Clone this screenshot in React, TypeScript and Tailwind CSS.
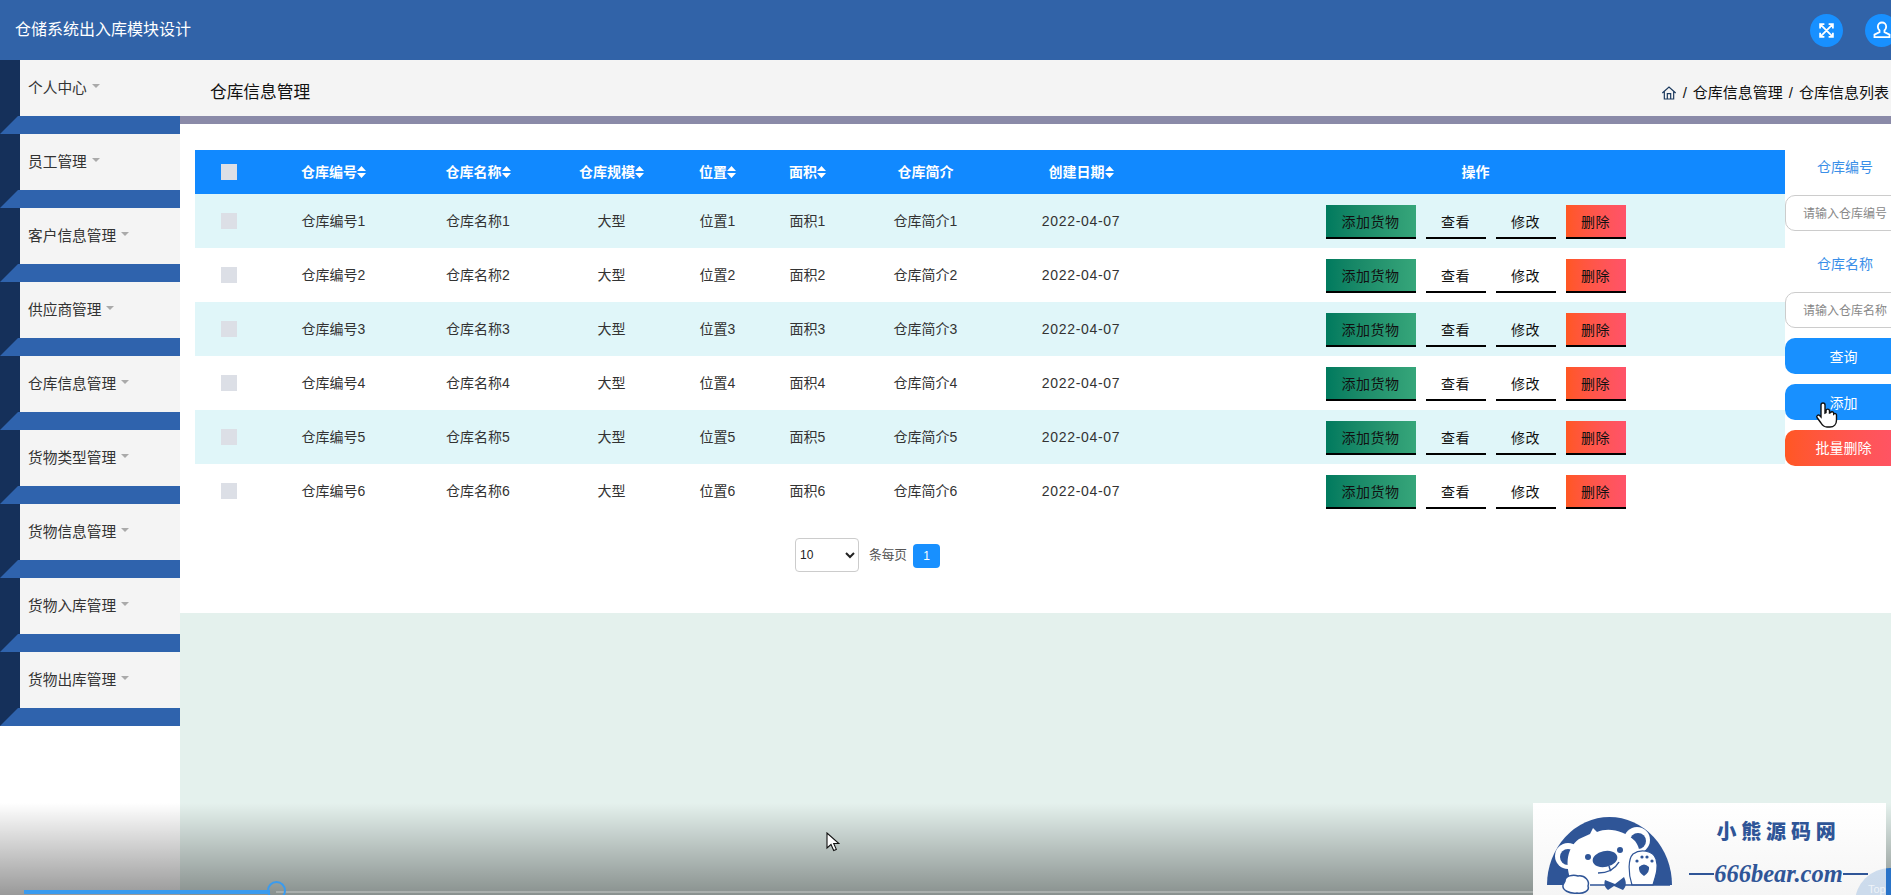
const fontStack = "font-['Liberation_Sans','Noto_Sans_CJK_SC',sans-serif]";
const menus = ["个人中心", "员工管理", "客户信息管理", "供应商管理", "仓库信息管理", "货物类型管理", "货物信息管理", "货物入库管理", "货物出库管理"];
const rows = [1, 2, 3, 4, 5, 6];

function Sort() {
  return (
    <svg width="9" height="12" viewBox="0 0 9 12" className="inline-block align-[-1px]">
      <path d="M4.5 0 9 5H0zM0 7h9L4.5 12z" fill="#fff" />
    </svg>
  );
}

function Head({ label, sort = true }: { label: string; sort?: boolean }) {
  return (
    <th className="font-bold text-white text-[14px]">
      {label}
      {sort && <Sort />}
    </th>
  );
}

function Bear() {
  return (
    <svg width="150" height="90" viewBox="0 0 150 90" className="shrink-0">
      <path d="M12 80A62.5 68 0 0 1 137 80Z" fill="#2f5597" />
      <circle cx="33" cy="51" r="13" fill="#fff" />
      <circle cx="33" cy="52" r="8" fill="#2f5597" />
      <circle cx="102" cy="35" r="13" fill="#fff" />
      <circle cx="103" cy="36" r="8" fill="#2f5597" />
      <path d="M38 80C30 64 30 44 44 34L55 29 58 23 62 27C74 22 90 26 100 36 108 46 105 60 96 80Z" fill="#fff" />
      <path d="M97 80C93 68 93 54 98 49 105 44 118 45 121 54 124 64 120 72 118 80Z" fill="#fff" stroke="#2f5597" strokeWidth="1.2" />
      <circle cx="53" cy="52" r="3" fill="#2f5597" />
      <circle cx="85" cy="45" r="3" fill="#2f5597" />
      <ellipse cx="70" cy="54" rx="12.5" ry="8" transform="rotate(-12 70 54)" fill="#2f5597" />
      <path d="M63 68C72 68 80 64 84 57" fill="none" stroke="#2f5597" strokeWidth="1.5" />
      <path d="M74 61Q75 65 76 66" fill="none" stroke="#2f5597" strokeWidth="1.5" />
      <path d="M104 62Q109 57 114 62 115 67 109 71 103 67 104 62Z" fill="#2f5597" />
      <circle cx="102" cy="56" r="1.6" fill="#2f5597" />
      <circle cx="107" cy="52" r="1.6" fill="#2f5597" />
      <circle cx="112" cy="52" r="1.6" fill="#2f5597" />
      <circle cx="117" cy="56" r="1.6" fill="#2f5597" />
      <path d="M55 80H135" stroke="#2f5597" strokeWidth="1.5" />
      <path d="M70 75 80 79 89 72C92 78 91 82 88 85L79 81 73 85C69 82 69 78 70 75Z" fill="#2f5597" />
      <path d="M30 76C30 71 38 69 43 71 50 70 55 76 53 81 55 86 48 89 42 88 34 89 27 85 28 80Z" fill="#fff" stroke="#2f5597" strokeWidth="1.5" />
    </svg>
  );
}

export default function App() {
  return (
    <div className={`relative h-screen w-full overflow-hidden bg-white text-[#333] ${fontStack}`}>
      <header className="flex h-[60px] items-center justify-between bg-[#3163a8] pl-[15px] pr-0">
        <div className="text-[16px] text-white">仓储系统出入库模块设计</div>
        <div className="flex w-[81px] shrink-0 gap-[22px] overflow-hidden">
          <span className="flex h-[33px] w-[33px] shrink-0 items-center justify-center rounded-full bg-[#1890ff] text-white">
            <svg width="17" height="17" viewBox="0 0 24 24" fill="none" stroke="currentColor" strokeWidth="2.6">
              <path d="M3 3l18 18M21 3 3 21M3 9V3h6M15 3h6v6M21 15v6h-6M9 21H3v-6" />
            </svg>
          </span>
          <span className="flex h-[33px] w-[33px] shrink-0 items-center justify-center rounded-full bg-[#1890ff] text-white">
            <svg width="20" height="20" viewBox="0 0 24 24" fill="none" stroke="currentColor" strokeWidth="2.2">
              <path d="M12 3a5 5 0 0 1 5 5c0 2-1 3.5-2 4.5v2l6 3v3H3v-3l6-3v-2C8 11.5 7 10 7 8a5 5 0 0 1 5-5z" />
            </svg>
          </span>
        </div>
      </header>

      <div className="flex h-[835px]">
        <aside className="w-[180px] shrink-0">
          {menus.map((m) => (
            <div key={m}>
              <div className="h-[56px] bg-[#15305a] pl-[20px]">
                <div className="flex h-full items-center bg-[#f4f4f4] pl-[8px] text-[14.7px] text-[#333]">
                  {m}
                  <span className="ml-[5px] h-0 w-0 -translate-y-[2px] border-x-[4px] border-t-[4px] border-x-transparent border-t-[#aaa]" />
                </div>
              </div>
              <div className="h-[18px] bg-[#15305a]">
                <div className="h-full bg-[#2f63ad] [clip-path:polygon(18px_0,100%_0,100%_100%,0_100%)]" />
              </div>
            </div>
          ))}
        </aside>

        <main className="flex min-w-0 flex-1 flex-col bg-[#e4f1ed]">
          <div className="flex h-[64px] shrink-0 items-center justify-between border-b-8 border-[#8a8aa8] bg-[#f4f4f4] pl-[30px] pr-[2px] pt-[10px] text-[#111]">
            <div className="text-[16.7px]">仓库信息管理</div>
            <div className="flex items-center gap-[6px] text-[15px]">
              <svg width="16" height="16" viewBox="0 0 24 24" fill="none" stroke="#1c3a5e" strokeWidth="1.8">
                <path d="M2 12 12 3l10 9M5 10v11h14V10M9.5 21v-8h5v8" />
              </svg>
              <span>/</span>
              <span>仓库信息管理</span>
              <span>/</span>
              <span>仓库信息列表</span>
            </div>
          </div>

          <section className="h-[489px] shrink-0 overflow-hidden bg-white pl-[15px] pt-[26px]">
            <div className="flex w-[1710px] items-start">
              <div className="w-[1590px] shrink-0">
                <table className="w-[1590px] table-fixed border-collapse">
                  <colgroup>
                    <col className="w-[68px]" />
                    <col className="w-[141px]" />
                    <col className="w-[148px]" />
                    <col className="w-[119px]" />
                    <col className="w-[93px]" />
                    <col className="w-[87px]" />
                    <col className="w-[149px]" />
                    <col className="w-[162px]" />
                    <col />
                  </colgroup>
                  <thead>
                    <tr className="h-[44px] bg-[#1189ff]">
                      <th>
                        <span className="mx-auto block h-[16px] w-[16px] bg-[#dcdfe6]" />
                      </th>
                      <Head label="仓库编号" />
                      <Head label="仓库名称" />
                      <Head label="仓库规模" />
                      <Head label="位置" />
                      <Head label="面积" />
                      <Head label="仓库简介" sort={false} />
                      <Head label="创建日期" />
                      <th className="pl-[4px] text-[14px] font-bold text-white">操作</th>
                    </tr>
                  </thead>
                  <tbody>
                    {rows.map((n) => (
                      <tr key={n} className={`h-[54px] text-center text-[14px] text-[#333] ${n % 2 ? "bg-[#e0f6f9]" : "bg-white"}`}>
                        <td>
                          <span className="mx-auto block h-[16px] w-[16px] bg-[#dcdfe6]" />
                        </td>
                        <td>仓库编号{n}</td>
                        <td>仓库名称{n}</td>
                        <td>大型</td>
                        <td>位置{n}</td>
                        <td>面积{n}</td>
                        <td>仓库简介{n}</td>
                        <td className="tracking-[0.7px]">2022-04-07</td>
                        <td>
                          <div className="mt-[2px] flex justify-center gap-[10px] pl-[4px] text-[14px] tracking-[0.5px] text-[#111]">
                            <button className="h-[34px] w-[90px] border-b-2 border-black bg-gradient-to-r from-[#007a5e] to-[#36a67a] pt-[2px]">添加货物</button>
                            <button className="h-[34px] w-[60px] border-b-2 border-black pt-[2px]">查看</button>
                            <button className="h-[34px] w-[60px] border-b-2 border-black pt-[2px]">修改</button>
                            <button className="h-[34px] w-[60px] border-b-2 border-black bg-gradient-to-r from-[#ff5722] to-[#ff5369] pt-[2px]">删除</button>
                          </div>
                        </td>
                      </tr>
                    ))}
                  </tbody>
                </table>
                <div className="ml-[600px] mt-[20px] flex items-center text-[12px]">
                  <select className="h-[34px] w-[64px] rounded-[4px] border border-[#ccc] bg-white pl-0 text-[12px] text-[#222]">
                    <option>10</option>
                  </select>
                  <span className="ml-[10px] mt-[2px] text-[12.7px] text-[#555]">条每页</span>
                  <span className="ml-[6px] mt-[2px] flex h-[24px] w-[27px] items-center justify-center rounded-[4px] bg-[#1890ff] text-white">1</span>
                </div>
              </div>

              <div className="flex w-[120px] shrink-0 flex-col text-center text-[14px]">
                <div className="flex h-[35px] items-center justify-center text-[#3b8fe8]">仓库编号</div>
                <input placeholder="请输入仓库编号" className="mt-[10px] h-[36px] w-full rounded-[10px] border border-[#ccc] bg-white pt-[2px] text-center text-[12px] outline-none placeholder:text-[#888]" />
                <div className="mt-[15px] flex h-[36px] items-center justify-center text-[#3b8fe8]">仓库名称</div>
                <input placeholder="请输入仓库名称" className="mt-[10px] h-[36px] w-full rounded-[10px] border border-[#ccc] bg-white pt-[2px] text-center text-[12px] outline-none placeholder:text-[#888]" />
                <button className="mt-[10px] h-[36px] w-[120px] rounded-[10px] bg-[#1890ff] pr-[3px] pt-[2px] text-white">查询</button>
                <button className="mt-[10px] h-[36px] w-[120px] rounded-[10px] bg-[#1890ff] pr-[3px] pt-[2px] text-white">添加</button>
                <button className="mt-[10px] h-[36px] w-[120px] rounded-[10px] bg-gradient-to-r from-[#ff5722] to-[#ff5369] pr-[3px] text-white">批量删除</button>
              </div>
            </div>
          </section>

          <div className="flex-1 bg-[#e4f1ed]" />
        </main>
      </div>

      {/* video player overlay */}
      <div className="pointer-events-none absolute inset-x-0 bottom-0 h-[92px] bg-gradient-to-b from-transparent to-black/40" />
      <div className="absolute bottom-[2px] left-[276px] right-0 h-[2px] bg-white/25" />
      <div className="absolute bottom-[1px] left-[24px] h-[4px] w-[246px] bg-[#3a9bef]" />
      <div className="absolute bottom-[-5px] left-[267px] h-[19px] w-[19px] rounded-full border-2 border-[#3a9bef]" />

      <svg width="14" height="21" viewBox="0 0 14 21" className="absolute left-[826px] top-[832px]">
        <path d="M1 1v15l4-3.5 2.7 6 2.6-1.1-2.6-5.9h5.2z" fill="#fff" stroke="#111" strokeWidth="1.1" />
      </svg>
      <svg width="24" height="28" viewBox="0 0 24 28" className="absolute left-[1814px] top-[401px]">
        <path d="M7 16V4a2 2 0 0 1 4 0v8l1-.5V9.5a1.8 1.8 0 0 1 3.5 0V12l1-.3a1.7 1.7 0 0 1 3.2.6V13a1.6 1.6 0 0 1 2.8 1v5c0 4-2.5 7-6.5 7h-3c-3 0-4.5-1.5-6-4l-4-5.5c-1-1.6 1.2-3.2 2.6-2z" fill="#fff" stroke="#111" strokeWidth="1.4" />
      </svg>

      <div className="absolute bottom-[-43px] right-[-34px] h-[70px] w-[70px] rounded-full bg-[#2a74c8]" />
      <div className="absolute bottom-0 left-[1533px] flex h-[92px] w-[353px] items-end overflow-hidden bg-gradient-to-b from-white to-[#f5f5f5]">
        <span className="ml-[2px]">
          <Bear />
        </span>
        <div className="mb-[6px] flex flex-1 flex-col items-center pr-[14px]">
          <div className="text-[20px] font-black tracking-[4.8px] text-[#2f5597]">小熊源码网</div>
          <div className="mt-[12px] flex items-center text-[#2f5597]">
            <span className="h-[2px] w-[25px] bg-[#2f5597]" />
            <span className="font-['Liberation_Serif',serif] text-[24.5px] font-bold italic leading-[30px]">666bear.com</span>
            <span className="h-[2px] w-[25px] bg-[#2f5597]" />
          </div>
        </div>
      </div>
      <div className="absolute bottom-[-43px] right-[-34px] h-[70px] w-[70px] rounded-full bg-[#2a74c8]/20 pl-[13px] pt-[15px] text-[11px] leading-[12px] text-white/70">
        Top
      </div>
    </div>
  );
}
